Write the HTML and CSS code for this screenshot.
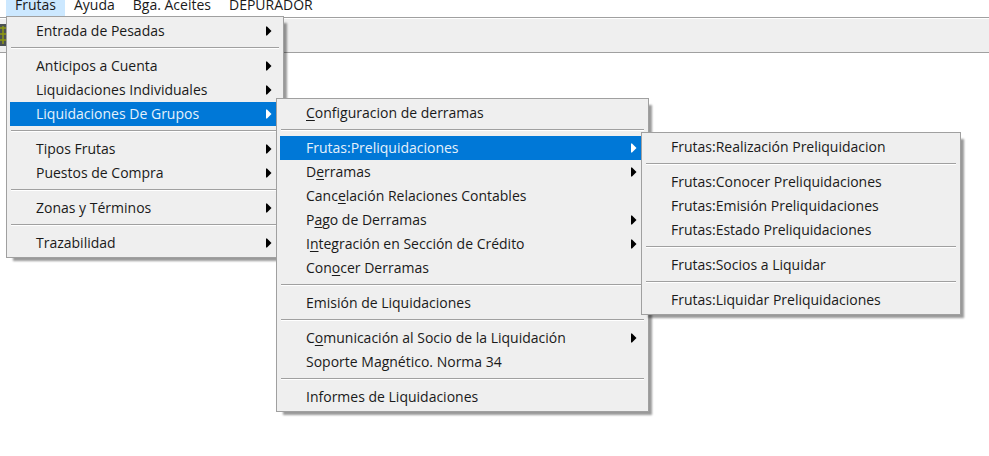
FILE: index.html
```
<!DOCTYPE html>
<html lang="es">

<head>
    <meta charset="UTF-8">
    <meta name="viewport" content="width=device-width, initial-scale=1.0">
    <title>Frutas</title>
    <link rel="stylesheet" href="styles.css">
</head>

<body>
    <!-- Arrow used by the entries that open a submenu -->
    <svg class="symbols" width="0" height="0" aria-hidden="true">
        <symbol id="arrow" viewBox="0 0 6 10">
            <path d="M0 0.5L1 0.5L5.5 5L1 9.5L0 9.5Z" fill="currentColor" />
        </symbol>
    </svg>

    <!-- Menu bar -->
    <nav>
        <ul class="menubar">
            <li class="open">
                <button>Frutas</button>

                <!-- Frutas -->
                <ul class="menu menu-main">
                    <li><button>Entrada de Pesadas <svg><use href="#arrow" /></svg></button></li>
                    <li class="separator"></li>
                    <li><button>Anticipos a Cuenta <svg><use href="#arrow" /></svg></button></li>
                    <li><button>Liquidaciones Individuales <svg><use href="#arrow" /></svg></button></li>
                    <li class="selected">
                        <button>Liquidaciones De Grupos <svg><use href="#arrow" /></svg></button>

                        <!-- Liquidaciones De Grupos -->
                        <ul class="menu menu-groups">
                            <li><button><span><u>C</u>onfiguracion de derramas</span></button></li>
                            <li class="separator"></li>
                            <li class="selected">
                                <button>Frutas:Preliquidaciones <svg><use href="#arrow" /></svg></button>

                                <!-- Preliquidaciones -->
                                <ul class="menu menu-pre">
                                    <li><button>Frutas:Realización Preliquidacion</button></li>
                                    <li class="separator"></li>
                                    <li><button>Frutas:Conocer Preliquidaciones</button></li>
                                    <li><button>Frutas:Emisión Preliquidaciones</button></li>
                                    <li><button>Frutas:Estado Preliquidaciones</button></li>
                                    <li class="separator"></li>
                                    <li><button>Frutas:Socios a Liquidar</button></li>
                                    <li class="separator"></li>
                                    <li><button>Frutas:Liquidar Preliquidaciones</button></li>
                                </ul>
                            </li>
                            <li><button><span>D<u>e</u>rramas</span> <svg><use href="#arrow" /></svg></button></li>
                            <li><button><span>Canc<u>e</u>lación Relaciones Contables</span></button></li>
                            <li><button><span>P<u>a</u>go de Derramas</span> <svg><use href="#arrow" /></svg></button></li>
                            <li><button><span>I<u>n</u>tegración en Sección de Crédito</span> <svg><use href="#arrow" /></svg></button></li>
                            <li><button><span>Con<u>o</u>cer Derramas</span></button></li>
                            <li class="separator"></li>
                            <li><button>Emisión de Liquidaciones</button></li>
                            <li class="separator"></li>
                            <li><button><span>C<u>o</u>municación al Socio de la Liquidación</span> <svg><use href="#arrow" /></svg></button></li>
                            <li><button>Soporte Magnético. Norma 34</button></li>
                            <li class="separator"></li>
                            <li><button>Informes de Liquidaciones</button></li>
                        </ul>
                    </li>
                    <li class="separator"></li>
                    <li><button>Tipos Frutas <svg><use href="#arrow" /></svg></button></li>
                    <li><button>Puestos de Compra <svg><use href="#arrow" /></svg></button></li>
                    <li class="separator"></li>
                    <li><button>Zonas y Términos <svg><use href="#arrow" /></svg></button></li>
                    <li class="separator"></li>
                    <li><button>Trazabilidad <svg><use href="#arrow" /></svg></button></li>
                </ul>
            </li>
            <li><button>Ayuda</button></li>
            <li><button>Bga. Aceites</button></li>
            <li><button>DEPURADOR</button></li>
        </ul>
    </nav>

    <!-- Toolbar -->
    <div class="toolbar">
        <button aria-label="Tabla">
            <svg width="22" height="22" viewBox="0 0 22 22">
                <rect width="22" height="22" fill="#4c5254" />
                <path d="M0 4H22M0 10H22M0 16H22M3 2V20M9 2V20M15 2V20" stroke="#8f9a10" stroke-width="1.5" />
            </svg>
        </button>
    </div>
</body>

</html>
```
FILE: styles.css
```
body {
    display: flow-root;
    min-height: 100vh;
    margin: 0;
    background-color: #fff;
    color: #1a1a1a;
    font-family: "Open Sans", "Noto Sans", sans-serif;
    font-size: 14px;
}

ul {
    list-style: none;
    margin: 0;
    padding: 0;
}

button {
    border: none;
    background: none;
    color: inherit;
    font: inherit;
    line-height: 24px;
    white-space: nowrap;
}

u {
    text-underline-offset: 2px;
    text-decoration-thickness: 1px;
    text-decoration-skip-ink: none;
}

.symbols {
    position: absolute;
}

/* Menu bar, flush with the top of the window */
.menubar {
    display: flex;
    padding-left: 6px;
}

.menubar > li {
    position: relative;
}

.menubar > li > button {
    display: block;
    height: 16px;
    padding: 0 9px 6px;
    line-height: 10px;
}

.menubar > .open > button {
    background-color: #cce8ff;
}

/* Drop-down menus */
.menu {
    position: absolute;
    z-index: 1;
    padding: 2px 3px;
    border: 1px solid #a0a0a0;
    background-color: #efefef;
    box-shadow: 5px 5px 2px -2px rgba(0, 0, 0, 0.4);
}

.menu-main {
    top: 100%;
    left: 0;
    min-width: 270px;
}

.menu .menu {
    top: -4px;
    left: calc(100% - 4px);
}

.menu-groups {
    min-width: 365px;
}

.menu-pre {
    min-width: 312px;
}

.menu li {
    position: relative;
}

.menu button {
    display: flex;
    align-items: center;
    justify-content: space-between;
    width: 100%;
    height: 24px;
    padding: 0 8px 0 26px;
    text-align: left;
}

.menu svg {
    width: 6px;
    height: 10px;
    color: #000;
}

.menu .selected > button {
    background-color: #0078d7;
    color: #e5f1fb;
}

.menu .selected > button svg {
    color: #fff;
}

.menu .separator {
    height: 1px;
    margin: 4px 1px 5px;
    border-top: 1px solid #a0a0a0;
    background-color: #fff;
}

/* Toolbar */
.toolbar {
    margin-top: 1px;
    padding: 6px 0;
    border-top: 1px solid #a0a0a0;
    border-bottom: 1px solid #a0a0a0;
    background-color: #efefef;
    box-shadow: inset 0 1px #fff;
}

.toolbar button {
    display: block;
    padding: 0;
}

.toolbar svg {
    display: block;
}
```
